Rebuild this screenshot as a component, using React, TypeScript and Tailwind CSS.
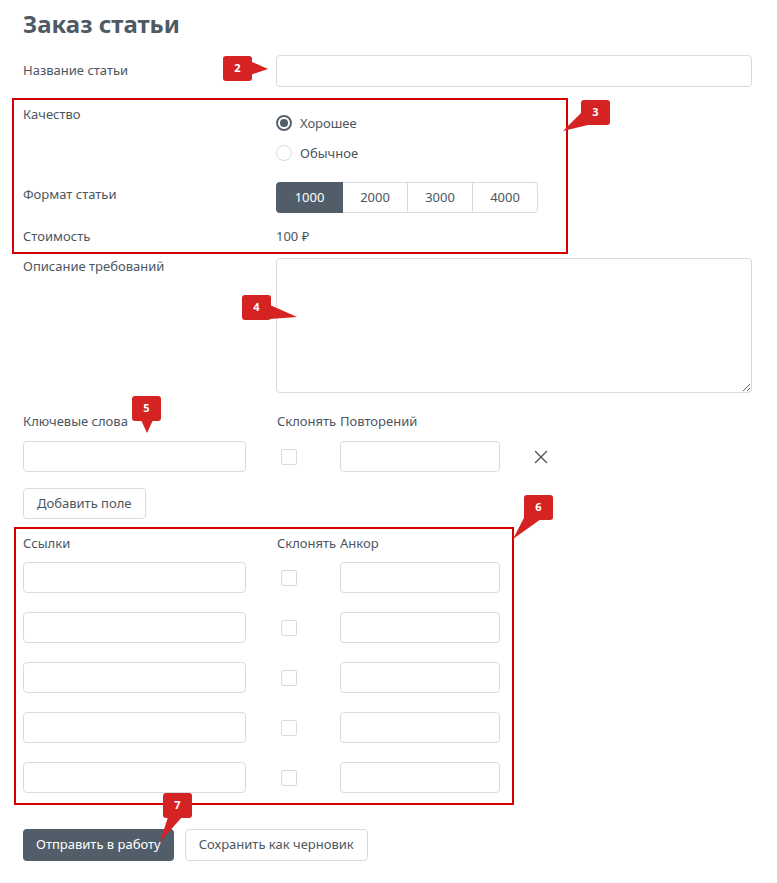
import { X } from 'lucide-react'

const labelCls = 'text-[13px] leading-[18px] text-[#4b5661]'
const inputCls =
  'block w-full rounded-[4px] border border-[#d9dcdf] bg-white px-2 outline-none'
const rowCols = 'grid grid-cols-[223px_31px_63px_160px] items-center'

const Checkbox = () => (
  <div className="ml-1 h-[16px] w-[16px] rounded-[2px] border border-[#d9dcdf] bg-white" />
)

const Radio = ({ checked, label }: { checked?: boolean; label: string }) => (
  <div className="flex h-[20px] items-center gap-2">
    {checked ? (
      <span className="flex h-[16px] w-[16px] items-center justify-center rounded-full border-2 border-[#5a6570]">
        <span className="h-[8px] w-[8px] rounded-full bg-[#515e69]" />
      </span>
    ) : (
      <span className="h-[16px] w-[16px] rounded-full border border-[#d9dcdf]" />
    )}
    <span className={labelCls}>{label}</span>
  </div>
)

const formats = ['1000', '2000', '3000', '4000']

// red numbered callouts drawn over the form
const Badge = ({ n, x, y }: { n: number; x: number; y: number }) => (
  <div
    className="absolute flex h-[25px] w-[29px] items-center justify-center rounded-[3px] bg-[#d52222] text-[11px] font-bold text-white"
    style={{ left: x, top: y }}
  >
    {n}
  </div>
)

export default function App() {
  return (
    <div
      className="relative h-[883px] w-full overflow-hidden bg-white"
      style={{ fontFamily: '"Noto Sans", "Open Sans", sans-serif' }}
    >
      <div className="pl-[23px] pr-[25px] pt-[8px]">
        <h1 className="text-[24px] font-bold leading-[32px] text-[#4f5a65]">
          Заказ статьи
        </h1>

        <div className="mt-[15px] grid grid-cols-[253px_1fr] items-center">
          <span className={`${labelCls} -mt-[2px]`}>Название статьи</span>
          <input className={`${inputCls} h-[32px]`} />
        </div>

        <div className="mt-[18px] grid grid-cols-[253px_1fr]">
          <span className={labelCls}>Качество</span>
          <div className="flex flex-col gap-[10px] pt-[8px]">
            <Radio checked label="Хорошее" />
            <Radio label="Обычное" />
          </div>
        </div>

        <div className="mt-[19px] grid grid-cols-[253px_1fr] items-start">
          <span className={`${labelCls} mt-[3px]`}>Формат статьи</span>
          <div className="flex h-[31px] w-fit">
            {formats.map((f, i) => (
              <div
                key={f}
                className={
                  i === 0
                    ? 'flex w-[67px] items-center justify-center rounded-l-[4px] bg-[#515e69] text-[13px] text-white'
                    : `flex w-[65px] items-center justify-center border border-l-0 border-[#d9dcdf] text-[13px] text-[#4b5661] ${
                        i === formats.length - 1 ? 'rounded-r-[4px]' : ''
                      }`
                }
              >
                {f}
              </div>
            ))}
          </div>
        </div>

        <div className="mt-[14px] grid grid-cols-[253px_1fr]">
          <span className={labelCls}>Стоимость</span>
          <span className={labelCls}>100 ₽</span>
        </div>

        <div className="mt-[13px] grid grid-cols-[253px_1fr]">
          <span className={`${labelCls} -mt-[1px]`}>Описание требований</span>
          <textarea className={`${inputCls} h-[135px] resize-y`} />
        </div>

        <div className={`mt-[19px] ${rowCols}`}>
          <span className={labelCls}>Ключевые слова</span>
          <span />
          <span className={labelCls}>Склонять</span>
          <span className={labelCls}>Повторений</span>
        </div>
        <div className={`mt-[11px] ${rowCols} grid-cols-[223px_31px_63px_160px_50px]`}>
          <input className={`${inputCls} h-[31px]`} />
          <span />
          <Checkbox />
          <input className={`${inputCls} h-[31px]`} />
          <X size={22} strokeWidth={1.5} className="ml-[30px] text-[#555]" />
        </div>

        <button className="mt-[16px] h-[31px] rounded-[4px] border border-[#d9dcdf] px-[13px] text-[13px] text-[#4b5661]">
          Добавить поле
        </button>

        <div className={`mt-[15px] ${rowCols}`}>
          <span className={labelCls}>Ссылки</span>
          <span />
          <span className={labelCls}>Склонять</span>
          <span className={labelCls}>Анкор</span>
        </div>
        <div className="mt-[10px] flex flex-col gap-[19px]">
          {[0, 1, 2, 3, 4].map((row) => (
            <div key={row} className={rowCols}>
              <input className={`${inputCls} h-[31px]`} />
              <span />
              <Checkbox />
              <input className={`${inputCls} h-[31px]`} />
            </div>
          ))}
        </div>

        <div className="mt-[36px] flex gap-[11px]">
          <button className="h-[32px] rounded-[4px] bg-[#515e69] px-[13px] text-[13px] text-white">
            Отправить в работу
          </button>
          <button className="h-[32px] rounded-[4px] border border-[#d9dcdf] px-[13px] text-[13px] text-[#4b5661]">
            Сохранить как черновик
          </button>
        </div>
      </div>

      <div className="pointer-events-none absolute left-[12px] top-[98px] h-[156px] w-[556px] border-2 border-[#d40000]" />
      <div className="pointer-events-none absolute left-[14px] top-[527px] h-[278px] w-[500px] border-2 border-[#d40000]" />

      <svg
        className="pointer-events-none absolute left-0 top-0"
        width="777"
        height="883"
      >
        <g fill="#d52222">
          <polygon points="250,61 250,75 268,69" />
          <polygon points="582,112 592,124 563,131" />
          <polygon points="270,305 270,319 297,317" />
          <polygon points="141,420 153,420 147,433" />
          <polygon points="528,510 541,519 513,539" />
          <polygon points="168,817 182,817 160,842" />
        </g>
      </svg>
      <Badge n={2} x={223} y={56} />
      <Badge n={3} x={581} y={100} />
      <Badge n={4} x={242} y={295} />
      <Badge n={5} x={132} y={396} />
      <Badge n={6} x={524} y={495} />
      <Badge n={7} x={163} y={793} />
    </div>
  )
}
